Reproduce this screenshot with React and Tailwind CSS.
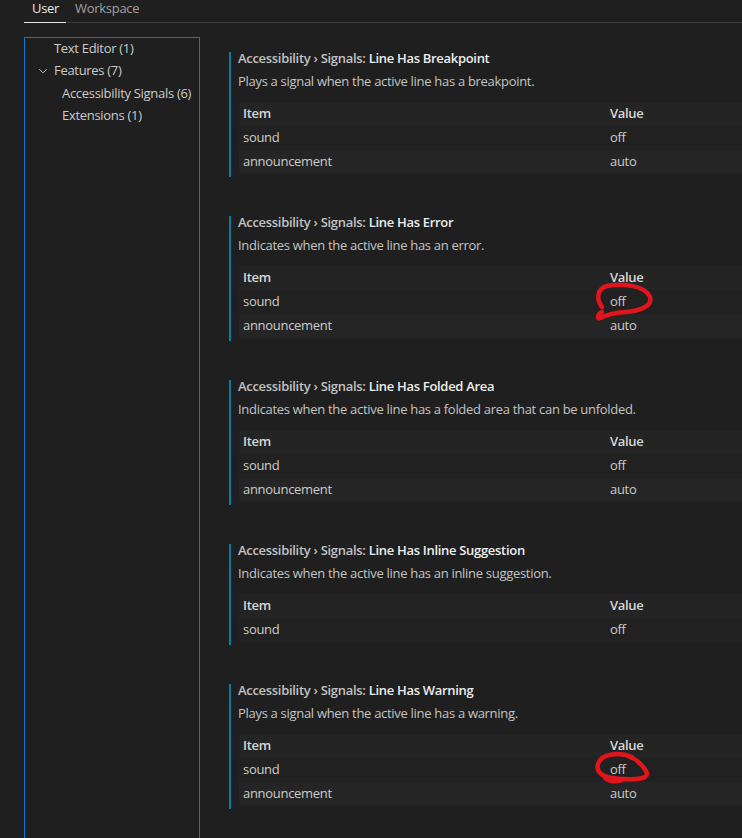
import React from 'react';

const sections = [
  {
    name: 'Line Has Breakpoint',
    desc: 'Plays a signal when the active line has a breakpoint.',
    rows: [['sound', 'off'], ['announcement', 'auto']],
  },
  {
    name: 'Line Has Error',
    desc: 'Indicates when the active line has an error.',
    rows: [['sound', 'off'], ['announcement', 'auto']],
  },
  {
    name: 'Line Has Folded Area',
    desc: 'Indicates when the active line has a folded area that can be unfolded.',
    rows: [['sound', 'off'], ['announcement', 'auto']],
  },
  {
    name: 'Line Has Inline Suggestion',
    desc: 'Indicates when the active line has an inline suggestion.',
    rows: [['sound', 'off']],
  },
  {
    name: 'Line Has Warning',
    desc: 'Plays a signal when the active line has a warning.',
    rows: [['sound', 'off'], ['announcement', 'auto']],
  },
];

function Setting({ s }) {
  return (
    <div className="flex">
      <div className="w-[2px] bg-[#0e7ba3] shrink-0" />
      <div className="flex-1 pb-[3px]">
        <div className="pl-[7px] h-[13px] leading-[13px] font-semibold text-[13px] whitespace-nowrap">
          <span className="text-[#c2c2c2]">Accessibility › Signals: </span>
          <span className="text-[#ededed]">{s.name}</span>
        </div>
        <div className="pl-[7px] mt-[7px] leading-[18px] text-[13px] text-[#c4c4c4] whitespace-nowrap">{s.desc}</div>
        <div className="ml-[8px] mt-[12px] text-[13px]">
          <div className="flex h-[24px] items-center bg-[#242424] font-semibold text-[#d8d8d8]">
            <div className="w-[367px] pl-[4px]">Item</div>
            <div className="pl-[4px]">Value</div>
          </div>
          {s.rows.map((r, i) => (
            <div key={i} className={`flex h-[24px] items-center text-[#cccccc] ${i % 2 === 0 ? 'bg-[#212121]' : 'bg-[#252525]'}`}>
              <div className="w-[367px] pl-[4px]">{r[0]}</div>
              <div className="pl-[4px]">{r[1]}</div>
            </div>
          ))}
        </div>
      </div>
    </div>
  );
}

export default function App() {
  return (
    <div className="relative w-[742px] h-[838px] overflow-hidden bg-[#1f1f1f] font-['Open_Sans',sans-serif] tracking-[-0.3px]">
      {/* tabs */}
      <div className="flex h-[22px] pl-[24px] text-[13px] leading-[17px]">
        <div className="px-[8px] text-[#e7e7e7]">User</div>
        <div className="px-[8px] text-[#a0a0a0]">Workspace</div>
      </div>
      <div className="ml-[24px] flex h-[1px]">
        <div className="w-[42px] bg-[#e7e7e7]" />
        <div className="flex-1 bg-[#3c3c3c]" />
      </div>

      <div className="flex">
        {/* tree */}
        <div className="ml-[24px] mt-[14px] w-[176px] h-[820px] border border-[#0078d4] text-[13px] text-[#cccccc]">
          <div className="h-[22px] leading-[21px] pl-[29px]">Text Editor (1)</div>
          <div className="h-[22px] flex items-center pl-[12px]">
            <svg width="12" height="12" viewBox="0 0 16 16" className="mr-[5px]">
              <path d="M3 5.5 L8 10.5 L13 5.5" fill="none" stroke="#c5c5c5" strokeWidth="1.3" />
            </svg>
            <span>Features (7)</span>
          </div>
          <div className="h-[22px] leading-[22px] pl-[37px] whitespace-nowrap">Accessibility Signals (6)</div>
          <div className="h-[22px] leading-[22px] pl-[37px]">Extensions (1)</div>
        </div>

        {/* settings list */}
        <div className="ml-[29px] mt-[29px] flex-1 flex flex-col gap-[39px]">
          {sections.map((s, i) => (
            <Setting key={i} s={s} />
          ))}
        </div>
      </div>

      {/* red annotations */}
      <svg className="absolute left-0 top-0 pointer-events-none" width="742" height="838">
        <path
          d="M602 307 C596 299, 597 289, 607 286 C621 283, 645 285, 650 297 C653 306, 640 311, 625 312 C612 313, 604 316, 600 318 C597 320, 597 314, 602 312"
          fill="none" stroke="#e3151c" strokeWidth="4.5" strokeLinecap="round" strokeLinejoin="round"
        />
        <path
          d="M632 757 C620 752, 601 753, 598 764 C595 775, 608 779, 624 779 C640 780, 650 778, 646 771 C642 764, 636 759, 628 756 M605 778 C610 782, 616 782, 622 780"
          fill="none" stroke="#e3151c" strokeWidth="4.5" strokeLinecap="round" strokeLinejoin="round"
        />
      </svg>
    </div>
  );
}
